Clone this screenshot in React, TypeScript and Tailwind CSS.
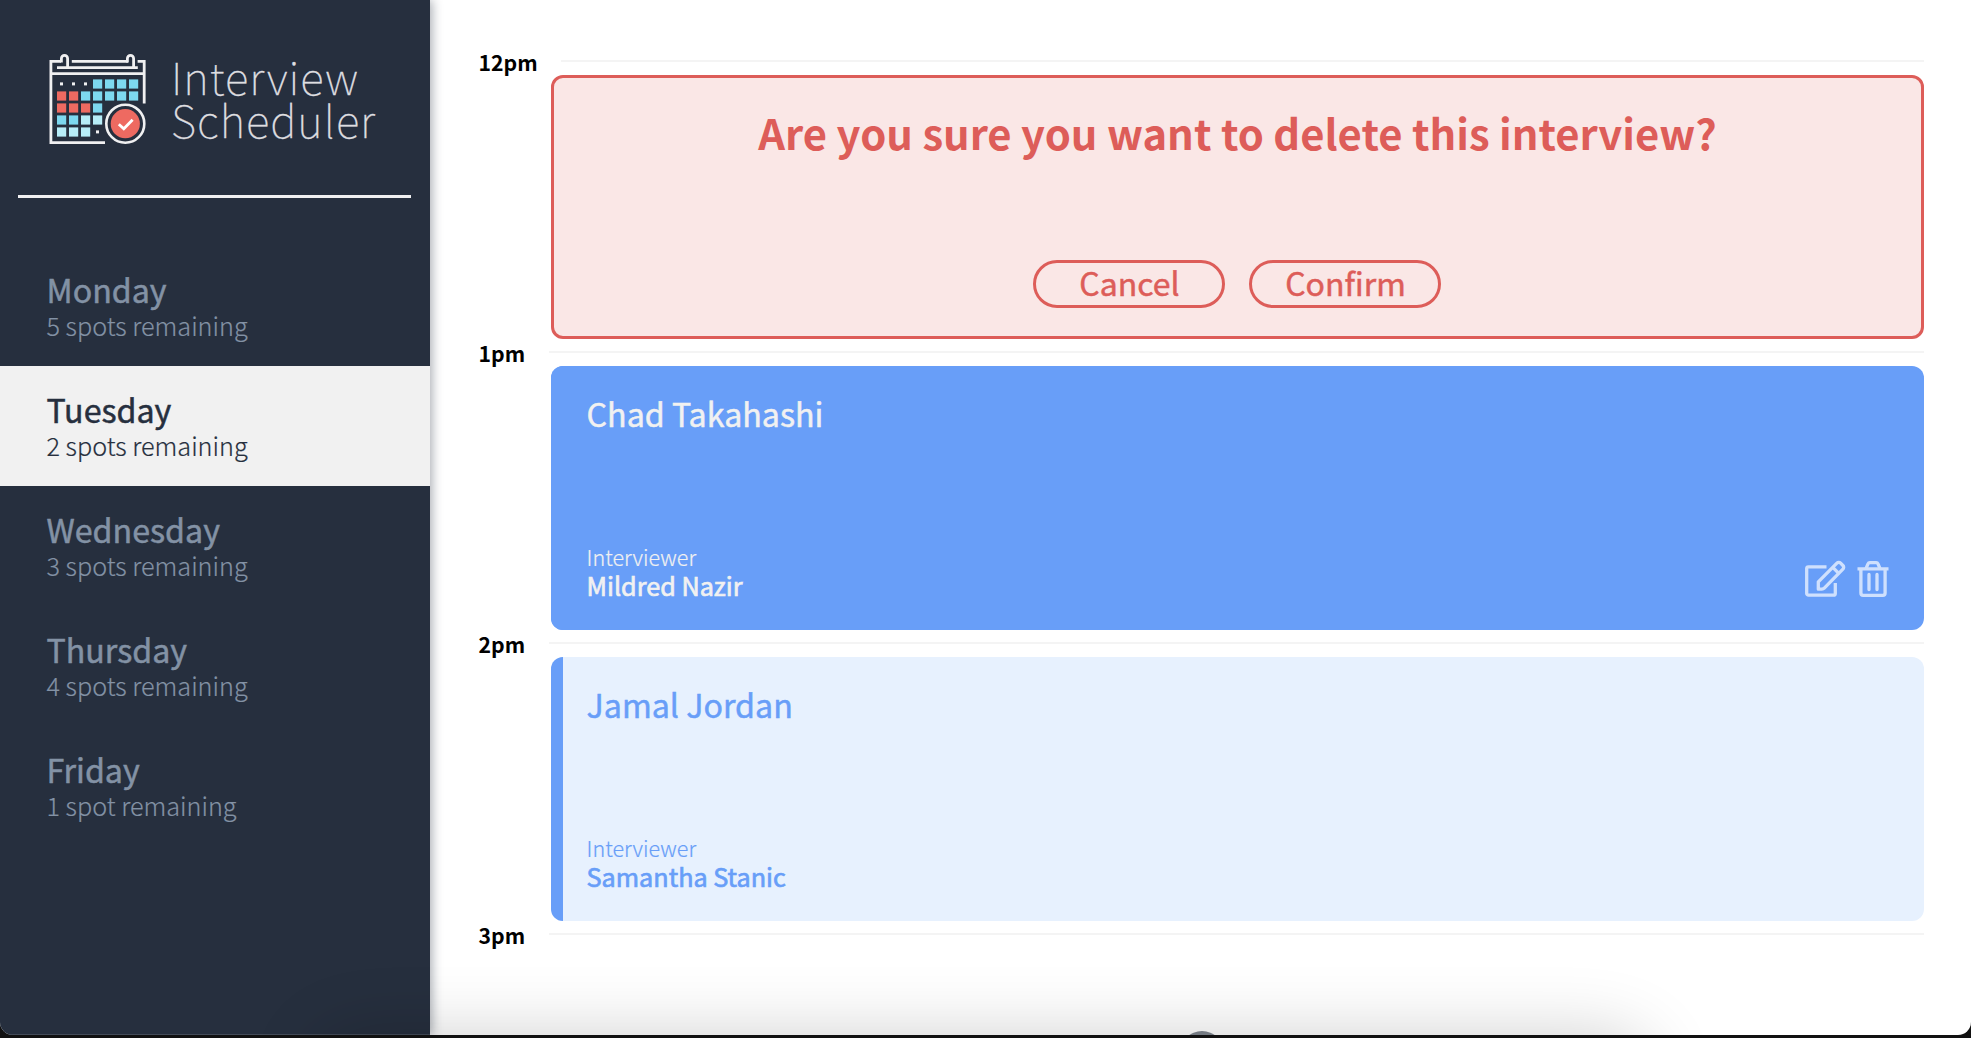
import React from "react";

const font = "font-['Noto_Sans_CJK_SC','Noto_Sans_CJK_JP','Open_Sans',sans-serif]";

const days = [
  { name: "Monday", spots: "5 spots remaining" },
  { name: "Tuesday", spots: "2 spots remaining", selected: true },
  { name: "Wednesday", spots: "3 spots remaining" },
  { name: "Thursday", spots: "4 spots remaining" },
  { name: "Friday", spots: "1 spot remaining" },
];

const cells: [number, number, string][] = [
  ...[3, 4, 5, 6].map((c) => [c, 0, "#7dd8ef"] as [number, number, string]),
  [0, 1, "#ee6a61"], [1, 1, "#ee6a61"],
  ...[2, 3, 4, 5, 6].map((c) => [c, 1, "#7dd8ef"] as [number, number, string]),
  [0, 2, "#ee6a61"], [1, 2, "#ee6a61"], [2, 2, "#ee6a61"], [3, 2, "#7dd8ef"],
  [0, 3, "#7dd8ef"], [1, 3, "#7dd8ef"], [2, 3, "#b7edf8"], [3, 3, "#b7edf8"],
  [0, 4, "#b7edf8"], [1, 4, "#b7edf8"], [2, 4, "#b7edf8"],
];
const dots = [[0, 0], [1, 0], [2, 0], [3, 4]];

function CalendarLogo() {
  return (
    <svg width="99" height="92" viewBox="0 0 99 92" fill="none" className="shrink-0">
      <g stroke="#f0f0f1" strokeWidth="2.8">
        <path d="M13 8.4H2.9V89.6H57" />
        <path d="M89.6 8.4H96.2V50.5" />
        <path d="M23.8 8.4H80" />
        <path d="M9 14.6H89.8" />
        <path d="M2.9 20.6H96" />
        <path d="M13.4 9.5V5.5a3.1 3.1 0 0 1 6.2 0V14.5" />
        <path d="M79.4 9.5V5.5a3.1 3.1 0 0 1 6.2 0V14.5" />
      </g>
      {cells.map(([c, r, color]) => (
        <rect key={`${c}-${r}`} x={9 + c * 12} y={26.4 + r * 12} width="9.2" height="9.2" fill={color} />
      ))}
      {dots.map(([c, r]) => (
        <rect key={`d${c}-${r}`} x={12 + c * 12} y={29.4 + r * 12} width="3" height="3" fill="#f0f0f1" />
      ))}
      <circle cx="77.3" cy="70.7" r="19" stroke="#f0f0f1" strokeWidth="2.6" />
      <circle cx="77.3" cy="70.7" r="14.6" fill="#ee6a61" />
      <path d="M70.8 71.2l5 4.6 8.8-9" stroke="#fff" strokeWidth="2.8" />
    </svg>
  );
}

function EditIcon() {
  return (
    <svg width="42" height="38" viewBox="0 0 42 38" fill="none" stroke="#cfe0fd" strokeWidth="3.3">
      <path d="M22.5 6.8H4.5a1.8 1.8 0 0 0-1.8 1.8V33.4a1.8 1.8 0 0 0 1.8 1.8H29.5a1.8 1.8 0 0 0 1.8-1.8V23" />
      <path d="M14.3 29.2V21.8L32.9 3.2a2.6 2.6 0 0 1 3.7 0l2.3 2.3a2.6 2.6 0 0 1 0 3.7L20.3 28.2a3.5 3.5 0 0 1-2.4 1z" strokeLinejoin="round" />
      <path d="M28.8 7.4l6.2 6.2" />
    </svg>
  );
}

function TrashIcon() {
  return (
    <svg width="32" height="38" viewBox="0 0 32 38" fill="none" stroke="#cfe0fd" strokeWidth="3.3">
      <path d="M0.5 8.8H31.5" />
      <path d="M9 8.5L11 3.8a2 2 0 0 1 1.8-1.2h6.4a2 2 0 0 1 1.8 1.2L23 8.5" />
      <path d="M3.9 9V33a2.3 2.3 0 0 0 2.3 2.3H25.8a2.3 2.3 0 0 0 2.3-2.3V9" />
      <path d="M12 14.5V29.5M20 14.5V29.5" strokeLinecap="round" />
    </svg>
  );
}

function Hour({ label, first }: { label: string; first?: boolean }) {
  return (
    <div className="flex h-[27px] items-start">
      <div className={`${first ? "w-[82px]" : "w-[70px]"} shrink-0 text-[21.2px] leading-[27px] font-bold text-black`}>{label}</div>
      <div className="mt-[12px] h-[2px] flex-1 bg-[#f4f4f4]" />
    </div>
  );
}

function Appointment({ student, interviewer, active }: { student: string; interviewer: string; active?: boolean }) {
  return (
    <div
      className={`ml-[72px] flex h-[264px] items-end justify-between overflow-hidden rounded-[12px] ${
        active ? "bg-[#689ef8] text-[#f1f1f1]" : "bg-[#e7f1fe] text-[#689ef8]"
      }`}
    >
      <div className="flex h-full">
        <div className="h-full w-3 bg-[#689ef8]" />
        <div className="flex flex-col justify-between pt-[27px] pb-[31px] pl-6">
          <div className="text-[32.2px] leading-10 [-webkit-text-stroke:0.5px]">{student}</div>
          <div>
            <div className="text-[21.5px] leading-[29px] font-light [-webkit-text-stroke:0.2px]">Interviewer</div>
            <div className="text-[25.2px] leading-[28px] [-webkit-text-stroke:0.7px]">{interviewer}</div>
          </div>
        </div>
      </div>
      {active && (
        <div className="mr-[35.5px] mb-[32px] flex gap-[11px]">
          <EditIcon />
          <TrashIcon />
        </div>
      )}
    </div>
  );
}

const button =
  "flex h-12 w-48 justify-center rounded-full border-3 border-[#dd5d59] text-[32px] leading-[39px] [-webkit-text-stroke:0.5px]";

export default function App() {
  return (
    <div className={`h-[1038px] w-full overflow-hidden bg-[#111] ${font}`}>
      <div className="relative flex h-[1035px] overflow-hidden rounded-b-[13px] bg-white">
        <aside className="z-10 w-[430.4px] shrink-0 border-b border-[#434b58] bg-[#262f3e] shadow-[2px_0_10px_rgba(38,47,62,0.4)]">
          <div className="flex h-[195px] items-start pt-[53px] pl-[47.5px]">
            <CalendarLogo />
            <div className="mt-[2px] ml-[24.5px] text-[44px] leading-[43px] font-thin text-[#dedee0] [-webkit-text-stroke:0.3px]">
              <div className="tracking-[1px]">Interview</div>
              <div className="tracking-[1px]">Scheduler</div>
            </div>
          </div>
          <div className="mr-[19.5px] ml-[18px] h-[3px] bg-[#f0f0f1]" />
          <nav className="mt-12">
            {days.map((d) => (
              <div
                key={d.name}
                className={`h-[120px] pt-[24.5px] pl-[46.5px] ${d.selected ? "bg-[#f1f1f1] text-[#262f3e]" : "text-[#8392a5]"}`}
              >
                <div className="text-[32.2px] leading-9 [-webkit-text-stroke:0.5px]">{d.name}</div>
                <div className="text-[25.2px] leading-9 font-light [-webkit-text-stroke:0.2px]">{d.spots}</div>
              </div>
            ))}
          </nav>
        </aside>
        <main className="flex-1 pt-[48px] pr-[46.6px] pl-[48.2px]">
          <Hour label="12pm" first />
          <div className="ml-[72px] flex h-[264px] flex-col items-center justify-between rounded-[12px] border-3 border-[#dd5d59] bg-[#fae7e6] pt-[25px] pb-[28px] text-[#dd5d59]">
            <div className="text-[41.75px] leading-[58px] font-bold">Are you sure you want to delete this interview?</div>
            <div className="flex gap-6">
              <button className={button}>Cancel</button>
              <button className={button}>Confirm</button>
            </div>
          </div>
          <Hour label="1pm" />
          <Appointment student="Chad Takahashi" interviewer="Mildred Nazir" active />
          <Hour label="2pm" />
          <Appointment student="Jamal Jordan" interviewer="Samantha Stanic" />
          <Hour label="3pm" />
        </main>
        <div className="pointer-events-none absolute top-[1050px] left-[330px] z-20 h-20 w-[1305px] rounded-[30px] shadow-[0_0_70px_15px_rgba(0,0,0,0.19)]" />
        <div className="absolute top-[1031px] left-[1180px] z-20 h-[44px] w-[44px] rounded-full bg-[#747a82]" />
      </div>
    </div>
  );
}
